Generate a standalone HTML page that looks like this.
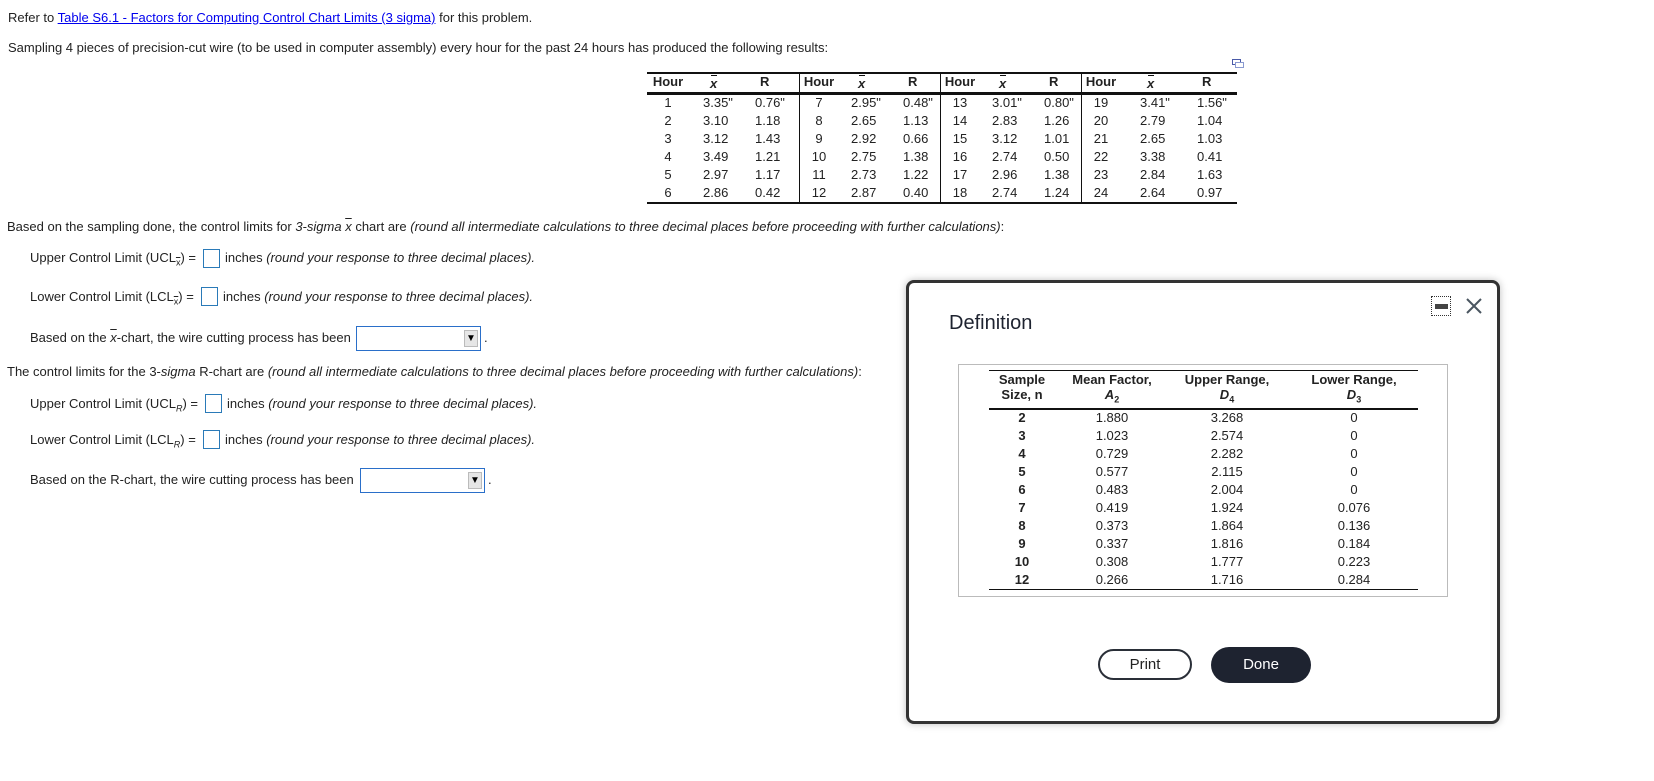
<!DOCTYPE html>
<html><head><meta charset="utf-8">
<style>
*{margin:0;padding:0;box-sizing:border-box}
body{width:1654px;height:781px;background:#fff;font-family:"Liberation Sans",Arial,sans-serif;font-size:13px;color:#222;position:relative;overflow:hidden}
.a{position:absolute;white-space:nowrap;line-height:16px}
a{color:#00e;text-decoration:underline}
i{font-style:italic}
.ov{text-decoration:overline}
.box{position:absolute;border:1px solid #2a7ab8;background:#fff}
.sel{position:absolute;border:1px solid #2a6fc9;background:#fff}
.sel span{position:absolute;right:2px;top:3px;width:14px;height:17px;background:#e6e6e6;border:1px solid #bbb;font-size:10px;text-align:center;line-height:16px;color:#000}
sub{font-size:9px}
.xb{position:absolute;font-weight:bold;font-style:italic;line-height:16px}
.xb:before{content:"";position:absolute;left:1px;top:-1px;width:6px;border-top:1px solid #111}
</style></head><body>
<div class="a" style="left:8px;top:10px">Refer to <a>Table S6.1 - Factors for Computing Control Chart Limits (3 sigma)</a> for this problem.</div>
<div class="a" style="left:8px;top:40px">Sampling 4 pieces of precision-cut wire (to be used in computer assembly) every hour for the past 24 hours has produced the following results:</div>

<svg style="position:absolute;left:1232px;top:59px" width="12" height="10"><rect x="0.5" y="0.5" width="8" height="5" fill="none" stroke="#4a5aa8"/><rect x="3.5" y="3.5" width="8" height="5" fill="#fff" stroke="#8a9ad0"/></svg>

<div style="position:absolute;left:647px;top:72px;width:590px;border-top:2px solid #111"></div>
<div style="position:absolute;left:647px;top:92px;width:590px;border-top:3px solid #111"></div>
<div style="position:absolute;left:647px;top:202px;width:590px;border-top:2px solid #111"></div>
<div style="position:absolute;left:799px;top:74px;height:128px;border-left:1px solid #111"></div>
<div style="position:absolute;left:940px;top:74px;height:128px;border-left:1px solid #111"></div>
<div style="position:absolute;left:1081px;top:74px;height:128px;border-left:1px solid #111"></div>
<div id="dt"></div>

<div class="a" style="left:7px;top:219px">Based on the sampling done, the control limits for <i>3-sigma</i> <i class="ov">x</i> chart are <i>(round all intermediate calculations to three decimal places before proceeding with further calculations)</i>:</div>
<div class="a" style="left:30px;top:250px">Upper Control Limit (UCL<sub><span class="ov">x</span></sub>) =</div>
<div class="box" style="left:203px;top:249px;width:17px;height:19px"></div>
<div class="a" style="left:225px;top:250px">inches <i>(round your response to three decimal places).</i></div>
<div class="a" style="left:30px;top:289px">Lower Control Limit (LCL<sub><span class="ov">x</span></sub>) =</div>
<div class="box" style="left:201px;top:287px;width:17px;height:19px"></div>
<div class="a" style="left:223px;top:289px">inches <i>(round your response to three decimal places).</i></div>
<div class="a" style="left:30px;top:330px">Based on the <i class="ov">x</i>-chart, the wire cutting process has been</div>
<div class="sel" style="left:356px;top:326px;width:125px;height:25px"><span>▼</span></div>
<div class="a" style="left:484px;top:330px">.</div>
<div class="a" style="left:7px;top:364px">The control limits for the 3-<i>sigma</i> R-chart are <i>(round all intermediate calculations to three decimal places before proceeding with further calculations)</i>:</div>
<div class="a" style="left:30px;top:396px">Upper Control Limit (UCL<sub><i>R</i></sub>) =</div>
<div class="box" style="left:205px;top:394px;width:17px;height:19px"></div>
<div class="a" style="left:227px;top:396px">inches <i>(round your response to three decimal places).</i></div>
<div class="a" style="left:30px;top:432px">Lower Control Limit (LCL<sub><i>R</i></sub>) =</div>
<div class="box" style="left:203px;top:430px;width:17px;height:19px"></div>
<div class="a" style="left:225px;top:432px">inches <i>(round your response to three decimal places).</i></div>
<div class="a" style="left:30px;top:472px">Based on the R-chart, the wire cutting process has been</div>
<div class="sel" style="left:360px;top:468px;width:125px;height:25px"><span>▼</span></div>
<div class="a" style="left:488px;top:472px">.</div>

<div style="position:absolute;left:906px;top:280px;width:594px;height:444px;border:3px solid #333;border-radius:8px;background:#fff;box-shadow:0 0 8px rgba(0,0,0,.25)"></div>
<div class="a" style="left:949px;top:311px;font-size:20px;line-height:24px;color:#1e2330">Definition</div>
<div style="position:absolute;left:1431px;top:296px;width:20px;height:20px;border:1px dotted #333"></div>
<div style="position:absolute;left:1435px;top:304px;width:13px;height:5px;background:#444"></div>
<svg style="position:absolute;left:1466px;top:298px" width="16" height="16"><path d="M1 1L15 15M15 1L1 15" stroke="#4a5560" stroke-width="2"/></svg>

<div style="position:absolute;left:958px;top:364px;width:490px;height:233px;border:1px solid #bbb"></div>
<div style="position:absolute;left:989px;top:370px;width:429px;border-top:1px solid #111"></div>
<div style="position:absolute;left:989px;top:408px;width:429px;border-top:2px solid #111"></div>
<div style="position:absolute;left:989px;top:589px;width:429px;border-top:1px solid #111"></div>
<div id="ft"></div>

<div style="position:absolute;left:1098px;top:649px;width:94px;height:31px;border:2px solid #2a2f38;border-radius:16px;text-align:center;line-height:27px;font-size:15px;color:#222">Print</div>
<div style="position:absolute;left:1211px;top:647px;width:100px;height:36px;background:#1e2330;border-radius:18px;text-align:center;line-height:36px;font-size:15px;color:#fff">Done</div>

<script>
var d=[[1,"3.35\"","0.76\"",7,"2.95\"","0.48\"",13,"3.01\"","0.80\"",19,"3.41\"","1.56\""],
[2,"3.10","1.18",8,"2.65","1.13",14,"2.83","1.26",20,"2.79","1.04"],
[3,"3.12","1.43",9,"2.92","0.66",15,"3.12","1.01",21,"2.65","1.03"],
[4,"3.49","1.21",10,"2.75","1.38",16,"2.74","0.50",22,"3.38","0.41"],
[5,"2.97","1.17",11,"2.73","1.22",17,"2.96","1.38",23,"2.84","1.63"],
[6,"2.86","0.42",12,"2.87","0.40",18,"2.74","1.24",24,"2.64","0.97"]];
var gx=[647,799,940,1081],h="";
var off=[[21,56,108],[20,52,104],[20,52,104],[20,59,116]];
for(var g=0;g<4;g++){var x=gx[g],o=off[g];
h+='<div class="a" style="left:'+(x+o[0]-20)+'px;top:74px;width:40px;text-align:center;font-weight:bold;font-size:13px">Hour</div>';
h+='<div class="xb" style="left:'+(x+o[1]+7)+'px;top:76px">x</div>';
h+='<div class="a" style="left:'+(x+o[2]+5)+'px;top:74px;font-weight:bold">R</div>';
for(var r=0;r<6;r++){var t=95+r*18;
h+='<div class="a" style="left:'+(x+o[0]-20)+'px;top:'+t+'px;width:40px;text-align:center">'+d[r][g*3]+'</div>';
h+='<div class="a" style="left:'+(x+o[1])+'px;top:'+t+'px">'+d[r][g*3+1]+'</div>';
h+='<div class="a" style="left:'+(x+o[2])+'px;top:'+t+'px">'+d[r][g*3+2]+'</div>';}}
document.getElementById("dt").innerHTML=h;
var f=[[2,"1.880","3.268","0"],[3,"1.023","2.574","0"],[4,"0.729","2.282","0"],[5,"0.577","2.115","0"],[6,"0.483","2.004","0"],[7,"0.419","1.924","0.076"],[8,"0.373","1.864","0.136"],[9,"0.337","1.816","0.184"],[10,"0.308","1.777","0.223"],[12,"0.266","1.716","0.284"]];
var cx=[1022,1112,1227,1354];h="";
var hd=["Sample<br>Size, n","Mean Factor,<br><i>A</i><sub>2</sub>","Upper Range,<br><i>D</i><sub>4</sub>","Lower Range,<br><i>D</i><sub>3</sub>"];
for(var c=0;c<4;c++){h+='<div class="a" style="left:'+(cx[c]-60)+'px;top:372px;width:120px;text-align:center;font-weight:bold;line-height:15px">'+hd[c]+'</div>';
for(var r=0;r<10;r++){h+='<div class="a" style="left:'+(cx[c]-40)+'px;top:'+(410+r*18)+'px;width:80px;text-align:center;'+(c==0?'font-weight:bold':'')+'">'+f[r][c]+'</div>';}}
document.getElementById("ft").innerHTML=h;
</script>
</body></html>
